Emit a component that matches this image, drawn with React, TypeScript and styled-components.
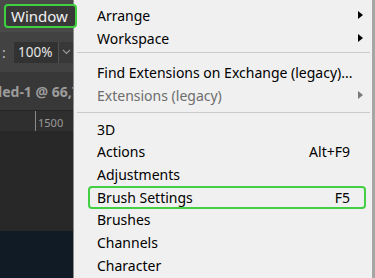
import styled, { createGlobalStyle } from "styled-components";

const GlobalStyle = createGlobalStyle`
  html, body {
    margin: 0;
    padding: 0;
    background: #282828;
  }
`;

// css
const Screen = styled.div`
  width: 375px;
  height: 278px;
  display: flex;
  flex-direction: row;
  overflow: hidden;
  font-family: "Noto Sans", "Open Sans", sans-serif;
`;

const Workspace = styled.div`
  width: 73px;
  flex-shrink: 0;
  display: flex;
  flex-direction: column;
`;

// sits above the open menu so the highlighted title overlaps its edge
const MenuBar = styled.div`
  height: 32px;
  background-color: #494949;
  display: flex;
  align-items: center;
  padding-left: 4px;
  box-sizing: border-box;
  position: relative;
  z-index: 2;
`;

const MenuTitle = styled.div`
  width: 73px;
  flex-shrink: 0;
  height: 24px;
  box-sizing: border-box;
  border: 2px solid #3fcf3f;
  border-radius: 4px;
  background-color: #393939;
  color: #f2f2f2;
  font-size: 15px;
  display: flex;
  align-items: center;
  padding-left: 5px;
  white-space: nowrap;
`;

const OptionsBar = styled.div`
  height: 40px;
  background-color: #424242;
  display: flex;
  align-items: center;
  color: #bdbdbd;
  font-size: 14px;
  padding-left: 2px;
  box-sizing: border-box;
`;

const Colon = styled.span`
  width: 12px;
`;

const ZoomField = styled.div`
  width: 44px;
  height: 21px;
  background-color: #323232;
  color: #e6e6e6;
  font-size: 13.5px;
  display: flex;
  align-items: center;
  padding-left: 4px;
  box-sizing: border-box;
`;

const ZoomDrop = styled.div`
  width: 15px;
  height: 21px;
  background-color: #383838;
  border-left: 1px solid #505050;
  display: flex;
  align-items: center;
  justify-content: center;
  box-sizing: border-box;
`;

const TabBar = styled.div`
  height: 38px;
  background-color: #383838;
  display: flex;
  align-items: center;
  overflow: hidden;
  white-space: nowrap;
`;

const TabText = styled.span`
  color: #9c9c9c;
  font-weight: 700;
  font-size: 14px;
  margin-left: -2px;
`;

const Ruler = styled.div`
  height: 21px;
  background-color: #2f2f2f;
  border-top: 1px solid #262626;
  display: flex;
  align-items: stretch;
  box-sizing: border-box;
`;

const RulerLabel = styled.span`
  color: #9a9a9a;
  font-size: 11px;
  margin-left: 35px;
  padding: 5px 0 0 2px;
  border-left: 1px solid #8a8a8a;
  line-height: 14px;
`;

const Canvas = styled.div`
  height: 100px;
  background-color: #282828;
`;

const Picture = styled.div`
  flex: 1;
  background-color: #111b26;
`;

const Menu = styled.div`
  flex: 1;
  min-width: 0;
  background-color: #f0f0f0;
  border-left: 1px solid #8c8c8c;
  border-right: 3px solid #a6a6a6;
  padding-top: 4px;
  display: flex;
  flex-direction: column;
  font-family: "Noto Sans", "Open Sans", sans-serif;
  font-size: 14px;
  color: #000;
`;

const Item = styled.div<{ $disabled?: boolean; $active?: boolean }>`
  height: 22.7px;
  flex-shrink: 0;
  box-sizing: border-box;
  margin: 0 6px 0 14px;
  padding: 0 14px 0 7px;
  display: flex;
  align-items: center;
  justify-content: space-between;
  color: ${(p) => (p.$disabled ? "#6d6d6d" : "#000")};
  border: 2px solid ${(p) => (p.$active ? "#43cf43" : "transparent")};
  border-radius: 4px;
  white-space: nowrap;
`;

const Shortcut = styled.span``;

const Arrow = styled.span<{ $disabled?: boolean }>`
  width: 0;
  height: 0;
  border-top: 4.5px solid transparent;
  border-bottom: 4.5px solid transparent;
  border-left: 5px solid ${(p) => (p.$disabled ? "#7a7a7a" : "#000")};
  margin-right: -13px;
`;

const Separator = styled.div<{ $height: number; $top: number }>`
  height: ${(p) => p.$height}px;
  flex-shrink: 0;
  margin: 0 2px 0 3px;
  box-sizing: border-box;
  padding-top: ${(p) => p.$top}px;
  &::after {
    content: "";
    display: block;
    height: 1px;
    background-color: #cacaca;
  }
`;

type Entry =
  | { sep: [number, number] }
  | { label: string; shortcut?: string; sub?: boolean; disabled?: boolean; active?: boolean };

const entries: Entry[] = [
  { label: "Arrange", sub: true },
  { label: "Workspace", sub: true },
  { sep: [12, 3] },
  { label: "Find Extensions on Exchange (legacy)..." },
  { label: "Extensions (legacy)", sub: true, disabled: true },
  { sep: [11, 5] },
  { label: "3D" },
  { label: "Actions", shortcut: "Alt+F9" },
  { label: "Adjustments" },
  { label: "Brush Settings", shortcut: "F5", active: true },
  { label: "Brushes" },
  { label: "Channels" },
  { label: "Character" },
];

function App() {
  return (
    <>
      <GlobalStyle />
      <Screen>
        <Workspace>
          <MenuBar>
            <MenuTitle>Window</MenuTitle>
          </MenuBar>
          <OptionsBar>
            <Colon>:</Colon>
            <ZoomField>100%</ZoomField>
            <ZoomDrop>
              <svg width="9" height="6" viewBox="0 0 9 6">
                <path d="M1 1 L4.5 4.5 L8 1" fill="none" stroke="#9a9a9a" strokeWidth="1.1" />
              </svg>
            </ZoomDrop>
          </OptionsBar>
          <TabBar>
            <TabText>led-1 @ 66,7</TabText>
          </TabBar>
          <Ruler>
            <RulerLabel>1500</RulerLabel>
          </Ruler>
          <Canvas />
          <Picture />
        </Workspace>
        <Menu>
          {entries.map((e, i) =>
            "sep" in e ? (
              <Separator key={i} $height={e.sep[0]} $top={e.sep[1]} />
            ) : (
              <Item key={i} $disabled={e.disabled} $active={e.active}>
                <span>{e.label}</span>
                {e.shortcut && <Shortcut>{e.shortcut}</Shortcut>}
                {e.sub && <Arrow $disabled={e.disabled} />}
              </Item>
            )
          )}
        </Menu>
      </Screen>
    </>
  );
}

export default App;
